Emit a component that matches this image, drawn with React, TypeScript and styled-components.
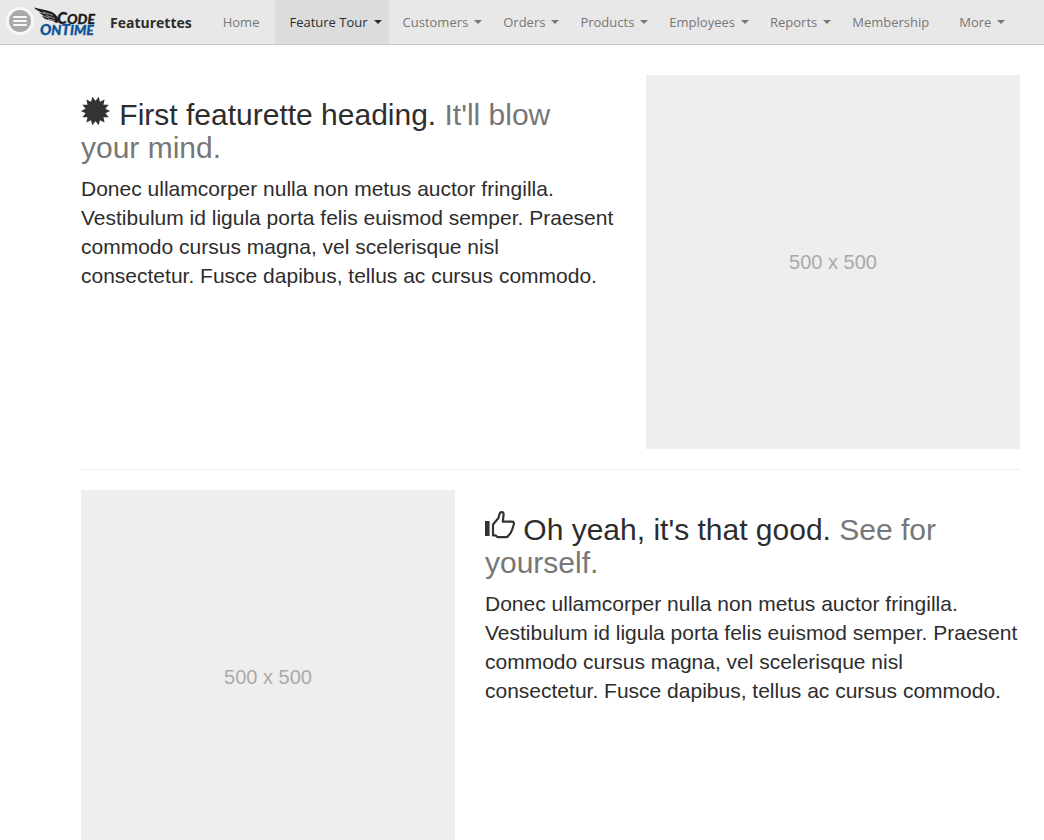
import React from "react";
import styled, { createGlobalStyle } from "styled-components";

const GlobalStyle = createGlobalStyle`
  *, *::before, *::after { box-sizing: border-box; }
  html { scrollbar-width: none; }
  body {
    margin: 0;
    background: #fff;
    color: #2d2d2d;
    font-family: "Liberation Sans", Arial, sans-serif;
  }
`;

const Page = styled.div`
  min-height: 100vh;
  display: flex;
  flex-direction: column;
`;

const Header = styled.header`
  display: flex;
  flex: none;
  height: 45px;
  background: #e8e8e8;
  border-bottom: 1px solid #c8c8c8;
  font-family: "Open Sans", "Segoe UI", sans-serif;
  white-space: nowrap;
`;

const Brand = styled.div`
  display: flex;
  align-items: center;
  padding: 0 17px 2px 6px;
`;

const MenuButton = styled.button`
  width: 28px;
  height: 28px;
  padding: 0;
  border: 3px solid #f7f7f7;
  border-radius: 50%;
  background: #a9a9a9;
  display: flex;
  flex-direction: column;
  align-items: center;
  justify-content: center;
  gap: 2px;
  cursor: pointer;
`;

const MenuBar = styled.span`
  width: 14px;
  height: 2px;
  border-radius: 1px;
  background: #f7f7f7;
`;

const Logo = styled.svg`
  width: 66px;
  height: 32px;
  display: block;
  margin-top: 2px;
`;

const BrandTitle = styled.span`
  margin-left: 10px;
  padding-top: 2px;
  font-size: 14px;
  font-weight: 700;
  color: #2d2d2d;
`;

const Nav = styled.nav`
  display: flex;
`;

const NavItem = styled.a<{ $active?: boolean; $menu?: boolean }>`
  display: flex;
  align-items: center;
  gap: 6px;
  padding: 0 ${(p) => (p.$menu ? 7 : 16)}px 0 14px;
  font-size: 13px;
  text-decoration: none;
  color: ${(p) => (p.$active ? "#2d2d2d" : "#777")};
  background: ${(p) => (p.$active ? "#dcdcdc" : "transparent")};
`;

const Caret = styled.span`
  border-top: 4px solid currentColor;
  border-left: 4px solid transparent;
  border-right: 4px solid transparent;
`;

const Main = styled.main`
  padding: 30px 24px 0 81px;
`;

const Featurette = styled.section<{ $imageFirst?: boolean }>`
  display: grid;
  grid-template-columns: ${(p) =>
    p.$imageFirst ? "minmax(0, 374fr) minmax(0, 535fr)" : "minmax(0, 535fr) minmax(0, 374fr)"};
  column-gap: 30px;
  align-items: start;
`;

const Copy = styled.div`
  padding-top: 23px;
`;

const Heading = styled.h2`
  margin: 0 0 10px;
  font-size: 30px;
  line-height: 33px;
  font-weight: 400;
`;

const Muted = styled.span`
  color: #777;
`;

const Lead = styled.p`
  margin: 0;
  font-size: 21px;
  line-height: 29px;
`;

const Placeholder = styled.div`
  aspect-ratio: 1;
  background: #eee;
  color: #aaa;
  font-size: 20px;
  display: flex;
  align-items: center;
  justify-content: center;
`;

const Divider = styled.hr`
  margin: 20px 0;
  border: 0;
  border-top: 1px solid #eee;
`;

const Glyph = styled.svg`
  width: 30px;
  height: 28px;
  vertical-align: -1px;
  overflow: visible;
`;

const burstPoints = Array.from({ length: 28 }, (_, i) => {
  const r = i % 2 ? 10.2 : 14.6;
  const a = (i * Math.PI) / 14 + Math.PI / 14;
  return `${(14.5 + r * Math.sin(a)).toFixed(2)},${(13 - r * Math.cos(a)).toFixed(2)}`;
}).join(" ");

const BurstIcon = () => (
  <Glyph viewBox="0 0 30 28" aria-hidden="true">
    <polygon points={burstPoints} fill="#333" />
  </Glyph>
);

const ThumbIcon = () => (
  <Glyph viewBox="0 0 30 28" aria-hidden="true">
    <path d="M0 8h4.600v15H0z" fill="#333" />
    <path
      d="M8 11.500 L13.300 5.200 L14.800 0.300 C15.300 -1.400 18.600 -1.300 18.600 1.300 L17.800 8.700 H27 C28.600 8.700 29.300 10 28.800 11.500 C28 14.500 26.800 18 25.500 20.300 L22 24.200 H12.600 L10.600 22.400 H8 Z"
      fill="none"
      stroke="#333"
      strokeWidth="2.2"
      strokeLinejoin="round"
    />
  </Glyph>
);

const navItems = [
  { label: "Home" },
  { label: "Feature Tour", menu: true, active: true },
  { label: "Customers", menu: true },
  { label: "Orders", menu: true },
  { label: "Products", menu: true },
  { label: "Employees", menu: true },
  { label: "Reports", menu: true },
  { label: "Membership" },
  { label: "More", menu: true },
];

const leadText =
  "Donec ullamcorper nulla non metus auctor fringilla. Vestibulum id ligula porta felis euismod semper. Praesent commodo cursus magna, vel scelerisque nisl consectetur. Fusce dapibus, tellus ac cursus commodo.";

const CodeOnTimeLogo = () => (
  <Logo viewBox="0 0 66 32" role="img" aria-label="Code OnTime">
    <path
      d="M0 1.500C7 3.500 13 4 18 6c3 1.300 4.500 4 6.500 6.500l-1 4.500c-2-.3-3.500-1-5-2.200-5.500-.9-9.500-2.600-10.500-5.400 2.500 1.500 5 2.300 8 2.900C11.500 10.500 6.500 8.800 5 5.800c3 1.700 7 2.700 10.500 3.500C9.500 6.800 3 5.500 0 1.500z"
      fill="#1c1c1c"
    />
    <path d="M9 6 19 9.400M12 9.500l9 3M14 13l7 1.600" stroke="#e8e8e8" strokeWidth=".6" />
    <g fontFamily="Lato, sans-serif" fontStyle="italic" fontWeight="900" strokeWidth=".3">
      <text x="23" y="18" fontSize="16" fill="#1c1c1c" stroke="#1c1c1c">
        C<tspan fontSize="14">ODE</tspan>
      </text>
      <text x="6" y="29" fontSize="15" fill="#0b5299" stroke="#0b5299">
        O<tspan fontSize="14">N</tspan>T<tspan fontSize="14">IME</tspan>
      </text>
    </g>
  </Logo>
);

export default function App() {
  return (
    <Page>
      <GlobalStyle />
      <Header>
        <Brand>
          <MenuButton aria-label="Menu">
            <MenuBar />
            <MenuBar />
            <MenuBar />
          </MenuButton>
          <CodeOnTimeLogo />
          <BrandTitle>Featurettes</BrandTitle>
        </Brand>
        <Nav>
          {navItems.map((item) => (
            <NavItem key={item.label} href="#" $menu={item.menu} $active={item.active}>
              {item.label}
              {item.menu && <Caret />}
            </NavItem>
          ))}
        </Nav>
      </Header>
      <Main>
        <Featurette>
          <Copy>
            <Heading>
              <BurstIcon /> First featurette heading. <Muted>It'll blow your mind.</Muted>
            </Heading>
            <Lead>{leadText}</Lead>
          </Copy>
          <Placeholder>500 x 500</Placeholder>
        </Featurette>
        <Divider />
        <Featurette $imageFirst>
          <Placeholder>500 x 500</Placeholder>
          <Copy>
            <Heading>
              <ThumbIcon /> Oh yeah, it's that good. <Muted>See for yourself.</Muted>
            </Heading>
            <Lead>{leadText}</Lead>
          </Copy>
        </Featurette>
      </Main>
    </Page>
  );
}
